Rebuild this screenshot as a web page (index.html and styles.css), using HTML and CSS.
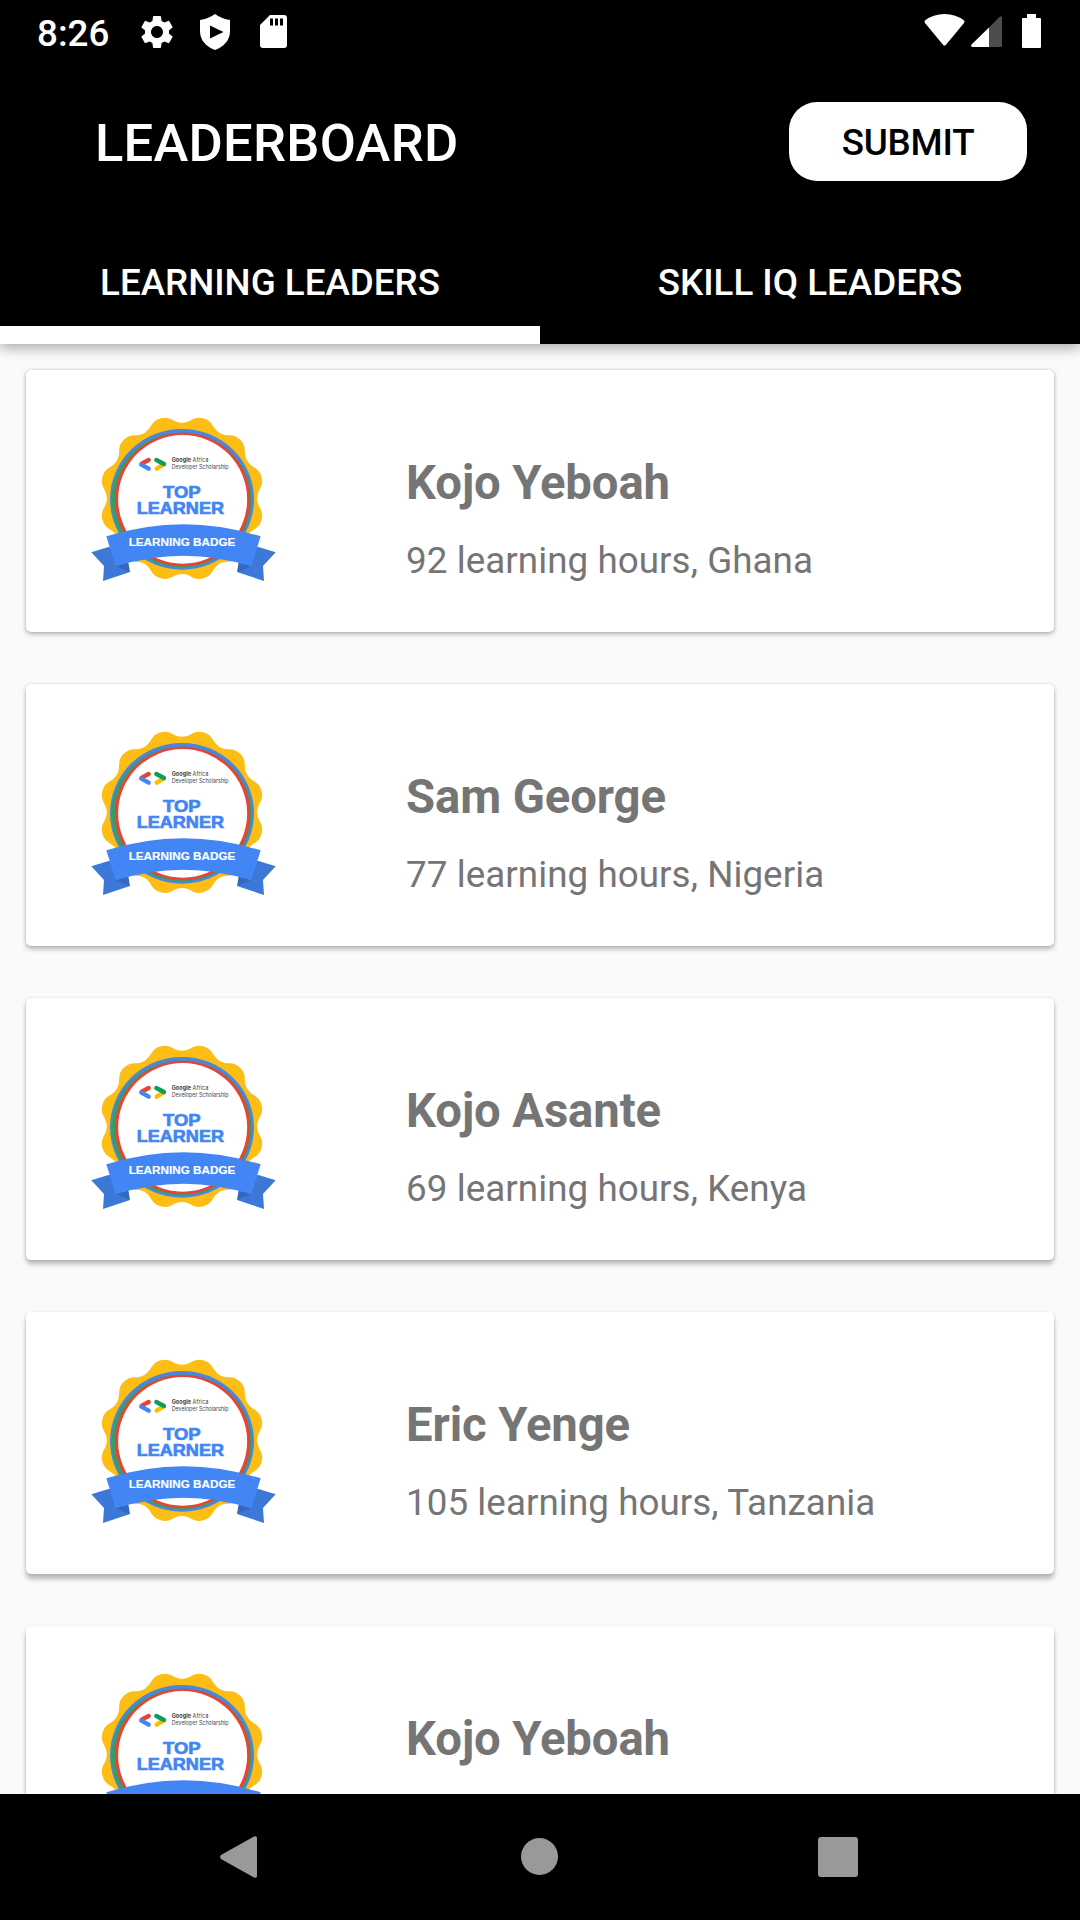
FILE: index.html
```html
<!DOCTYPE html>
<html lang="en">
<head>
<meta charset="utf-8">
<title>Leaderboard</title>
<link rel="stylesheet" href="styles.css">
</head>
<body>
<svg class="defs" aria-hidden="true">
  <defs>
    <path id="lobe" d="M-59.3-221.2C-33-228-32-251 0-251S33-228 59.3-221.2L0 0Z"/>
    <g id="badge">
      <g fill="#fcbe15" transform="translate(336 325) scale(.985 .99)">
        <circle r="227"/>
        <use href="#lobe" transform="rotate(15)"/><use href="#lobe" transform="rotate(45)"/>
        <use href="#lobe" transform="rotate(75)"/><use href="#lobe" transform="rotate(105)"/>
        <use href="#lobe" transform="rotate(135)"/><use href="#lobe" transform="rotate(165)"/>
        <use href="#lobe" transform="rotate(195)"/><use href="#lobe" transform="rotate(225)"/>
        <use href="#lobe" transform="rotate(255)"/><use href="#lobe" transform="rotate(285)"/>
        <use href="#lobe" transform="rotate(315)"/><use href="#lobe" transform="rotate(345)"/>
      </g>
      <ellipse cx="336" cy="328" rx="216" ry="211" fill="#4a86e0"/>
      <ellipse cx="335" cy="330" rx="210" ry="202" fill="#34a060"/>
      <ellipse cx="338" cy="328.500" rx="203" ry="200" fill="#ea4335"/>
      <ellipse cx="338" cy="328" rx="193.500" ry="193" fill="#fff"/>
      <g fill="none" stroke-width="13" stroke-linecap="round">
        <path d="M236 210L215 221" stroke="#ea4335"/>
        <path d="M214 224L236 236" stroke="#4285f4"/>
        <path d="M281 223L260 236" stroke="#fbbc04"/>
        <path d="M259 210L282 222" stroke="#0f9d58"/>
      </g>
      <path d="M64 487L118 470L180 546L99 573L102 528Z" fill="#3c78d8"/>
      <path d="M617 487L563 470L501 546L582 573L579 528Z" fill="#3c78d8"/>
      <path d="M137 528L175 517L180 546Z" fill="#3467bd"/>
      <path d="M544 528L506 517L501 546Z" fill="#3467bd"/>
      <path d="M109 439Q340 366 572 439L544 529Q340 465 137 529Z" fill="#4285f4"/>
    </g>
  </defs>
</svg>
<div class="screen">
  <div class="status-bar">
    <span class="clock">8:26</span>
    <svg class="gear" viewBox="0 0 24 24"><path fill="#fff" d="M19.140 12.940c.04-.3.060-.61.060-.94 0-.32-.02-.64-.07-.94l2.030-1.580c.18-.14.230-.41.120-.61l-1.920-3.320c-.12-.22-.37-.29-.59-.22l-2.390.96c-.5-.38-1.030-.7-1.620-.94l-.36-2.540c-.04-.24-.24-.41-.48-.41h-3.840c-.24 0-.43.170-.47.410l-.36 2.540c-.59.240-1.130.570-1.620.940l-2.390-.96c-.22-.08-.47 0-.59.220L2.740 8.870c-.12.210-.08.470.120.610l2.030 1.580c-.05.300-.09.630-.09.940s.02.640.070.940l-2.030 1.580c-.18.140-.23.410-.12.610l1.920 3.320c.12.220.37.290.59.220l2.390-.96c.5.380 1.030.7 1.620.940l.36 2.540c.05.240.240.410.480.410h3.840c.24 0 .44-.17.470-.41l.36-2.540c.59-.24 1.130-.56 1.620-.94l2.390.96c.22.080.470 0 .59-.22l1.920-3.320c.12-.22.070-.47-.12-.61l-2.010-1.580zM12 15.600c-1.980 0-3.600-1.620-3.600-3.600s1.620-3.600 3.600-3.600 3.600 1.620 3.600 3.600-1.620 3.600-3.600 3.600z"/></svg>
    <svg class="shield" viewBox="0 0 30 36"><path fill="#fff" d="M15 0Q22 5 30 6V17Q30 30 15 36Q0 30 0 17V6Q8 5 15 0Z"/><path fill="#000" d="M10 11.500L23.500 18L10 24.500Z"/></svg>
    <svg class="sd-card" viewBox="0 0 27 33"><path fill="#fff" d="M10 0H24Q27 0 27 3V30Q27 33 24 33H3Q0 33 0 30V10Z"/><path fill="#000" d="M10 3.500h3v7h-3zM15 3.500h3v7h-3zM20 3.500h3v7h-3z"/></svg>
    <svg class="wifi" viewBox="0 0 41 32"><path fill="#fff" d="M1 6.500Q9 0 20.500 0T40 6.500Q41 7.500 40 9L21.800 31Q20.500 32 19.200 31L1 9Q0 7.500 1 6.500Z"/></svg>
    <svg class="signal" viewBox="0 0 31 31"><path fill="#fff" d="M18 11.500V31H1Q-.5 30 .5 28.500Z"/><path fill="#4d4d4d" d="M18 11.500L28.500 1Q30.500-.5 31 1.500V29.500Q31 31 29.500 31H18Z"/></svg>
    <svg class="battery" viewBox="0 0 19 34"><path fill="#fff" d="M5 0H14V4H18Q19 4 19 5V33Q19 34 18 34H1Q0 34 0 33V5Q0 4 1 4H5Z"/></svg>
  </div>
  <header class="app-bar">
    <div class="toolbar">
      <h1 class="title">LEADERBOARD</h1>
      <button class="submit">SUBMIT</button>
    </div>
    <nav class="tabs">
      <a class="tab tab-active">LEARNING LEADERS</a>
      <a class="tab">SKILL IQ LEADERS</a>
    </nav>
  </header>
  <main class="list">
    <article class="card">
      <svg class="badge" viewBox="0 0 690 630"><use href="#badge"/><text class="org" x="305" y="216" textLength="110" lengthAdjust="spacingAndGlyphs"><tspan class="org-strong">Google</tspan> Africa</text><text class="org" x="305" y="237" textLength="171" lengthAdjust="spacingAndGlyphs">Developer Scholarship</text><text class="rank" x="279" y="323" textLength="113" lengthAdjust="spacingAndGlyphs">TOP</text><text class="rank" x="200" y="371" textLength="262" lengthAdjust="spacingAndGlyphs">LEARNER</text><text class="ribbon" x="176" y="468" textLength="320" lengthAdjust="spacingAndGlyphs">LEARNING BADGE</text></svg>
      <div class="info"><h2 class="name">Kojo Yeboah</h2><p class="detail">92 learning hours, Ghana</p></div>
    </article>
    <article class="card">
      <svg class="badge" viewBox="0 0 690 630"><use href="#badge"/><text class="org" x="305" y="216" textLength="110" lengthAdjust="spacingAndGlyphs"><tspan class="org-strong">Google</tspan> Africa</text><text class="org" x="305" y="237" textLength="171" lengthAdjust="spacingAndGlyphs">Developer Scholarship</text><text class="rank" x="279" y="323" textLength="113" lengthAdjust="spacingAndGlyphs">TOP</text><text class="rank" x="200" y="371" textLength="262" lengthAdjust="spacingAndGlyphs">LEARNER</text><text class="ribbon" x="176" y="468" textLength="320" lengthAdjust="spacingAndGlyphs">LEARNING BADGE</text></svg>
      <div class="info"><h2 class="name">Sam George</h2><p class="detail">77 learning hours, Nigeria</p></div>
    </article>
    <article class="card">
      <svg class="badge" viewBox="0 0 690 630"><use href="#badge"/><text class="org" x="305" y="216" textLength="110" lengthAdjust="spacingAndGlyphs"><tspan class="org-strong">Google</tspan> Africa</text><text class="org" x="305" y="237" textLength="171" lengthAdjust="spacingAndGlyphs">Developer Scholarship</text><text class="rank" x="279" y="323" textLength="113" lengthAdjust="spacingAndGlyphs">TOP</text><text class="rank" x="200" y="371" textLength="262" lengthAdjust="spacingAndGlyphs">LEARNER</text><text class="ribbon" x="176" y="468" textLength="320" lengthAdjust="spacingAndGlyphs">LEARNING BADGE</text></svg>
      <div class="info"><h2 class="name">Kojo Asante</h2><p class="detail">69 learning hours, Kenya</p></div>
    </article>
    <article class="card">
      <svg class="badge" viewBox="0 0 690 630"><use href="#badge"/><text class="org" x="305" y="216" textLength="110" lengthAdjust="spacingAndGlyphs"><tspan class="org-strong">Google</tspan> Africa</text><text class="org" x="305" y="237" textLength="171" lengthAdjust="spacingAndGlyphs">Developer Scholarship</text><text class="rank" x="279" y="323" textLength="113" lengthAdjust="spacingAndGlyphs">TOP</text><text class="rank" x="200" y="371" textLength="262" lengthAdjust="spacingAndGlyphs">LEARNER</text><text class="ribbon" x="176" y="468" textLength="320" lengthAdjust="spacingAndGlyphs">LEARNING BADGE</text></svg>
      <div class="info"><h2 class="name">Eric Yenge</h2><p class="detail">105 learning hours, Tanzania</p></div>
    </article>
    <article class="card">
      <svg class="badge" viewBox="0 0 690 630"><use href="#badge"/><text class="org" x="305" y="216" textLength="110" lengthAdjust="spacingAndGlyphs"><tspan class="org-strong">Google</tspan> Africa</text><text class="org" x="305" y="237" textLength="171" lengthAdjust="spacingAndGlyphs">Developer Scholarship</text><text class="rank" x="279" y="323" textLength="113" lengthAdjust="spacingAndGlyphs">TOP</text><text class="rank" x="200" y="371" textLength="262" lengthAdjust="spacingAndGlyphs">LEARNER</text><text class="ribbon" x="176" y="468" textLength="320" lengthAdjust="spacingAndGlyphs">LEARNING BADGE</text></svg>
      <div class="info"><h2 class="name">Kojo Yeboah</h2></div>
    </article>
  </main>
  <footer class="nav-bar">
    <svg class="back" viewBox="0 0 37 42"><path fill="#999" d="M1 19L34 .5Q37-.5 37 2V40Q37 42.500 34 41.500L1 23Q-.8 21 1 19Z"/></svg>
    <svg class="home" viewBox="0 0 37 37"><circle cx="18.500" cy="18.500" r="18.500" fill="#999"/></svg>
    <svg class="recents" viewBox="0 0 40 40"><rect width="40" height="40" rx="3" fill="#999"/></svg>
  </footer>
</div>
</body>
</html>
```
FILE: styles.css
```css
* { box-sizing: border-box; }

body {
  margin: 0;
  background: #fafafa;
  font-family: Roboto, "Liberation Sans", sans-serif;
}

h1, h2, p { margin: 0; }

svg { display: block; flex: none; }

.defs { position: absolute; width: 0; height: 0; }

.screen {
  width: 1080px;
  height: 1920px;
  display: flex;
  flex-direction: column;
  overflow: hidden;
}

.status-bar {
  flex: none;
  height: 67px;
  padding: 0 39px 0 37px;
  display: flex;
  align-items: flex-start;
  background: #000;
  color: #fff;
}

.clock { width: 100px; font-size: 36.75px; font-weight: 500; line-height: 67px; }
.gear { width: 40px; height: 40px; margin-top: 12px; }
.shield { width: 30px; height: 36px; margin: 14px 0 0 23px; }
.sd-card { width: 27px; height: 33px; margin: 15px 0 0 30px; }
.wifi { width: 41px; height: 32px; margin: 14px 0 0 auto; }
.signal { width: 31px; height: 31px; margin: 16px 0 0 6px; }
.battery { width: 19px; height: 34px; margin: 14px 0 0 20px; }

.app-bar {
  flex: none;
  height: 277px;
  display: flex;
  flex-direction: column;
  background: #000;
  color: #fff;
  box-shadow: 0 4px 12px rgba(0, 0, 0, .32);
  z-index: 1;
}

.toolbar {
  height: 153px;
  padding: 35px 53px 0 95px;
  display: flex;
  justify-content: space-between;
  align-items: flex-start;
}

.title { font-size: 52.5px; font-weight: 500; line-height: 82px; letter-spacing: .25px; }

.submit {
  width: 238px;
  height: 79px;
  padding: 3px 0 0;
  border: 0;
  border-radius: 28px;
  background: #fff;
  color: #000;
  font: 500 36.75px/76px Roboto, "Liberation Sans", sans-serif;
  letter-spacing: -.2px;
}

.tabs { flex: 1; display: flex; }

.tab {
  flex: 1;
  padding-top: 34px;
  border-bottom: 18px solid #000;
  font-size: 36.75px;
  font-weight: 500;
  line-height: 57px;
  text-align: center;
}

.tab-active { border-bottom-color: #fff; }

.list {
  flex: 1;
  min-height: 0;
  padding: 26px 26px 0;
  display: flex;
  flex-direction: column;
  gap: 52px;
  overflow: hidden;
}

.card {
  flex: none;
  height: 262px;
  padding-left: 44px;
  display: flex;
  align-items: flex-start;
  border-radius: 5px;
  background: #fff;
  box-shadow: 0 2px 5px rgba(0, 0, 0, .27), 0 0 3px rgba(0, 0, 0, .15);
}

/* The cast shadow lengthens for cards further down the screen. */
.card:nth-child(2) { box-shadow: 0 3px 5px rgba(0, 0, 0, .27), 0 0 3px rgba(0, 0, 0, .13); }
.card:nth-child(3) { box-shadow: 0 4px 5px rgba(0, 0, 0, .27), 0 0 3px rgba(0, 0, 0, .11); }
.card:nth-child(n+4) { box-shadow: 0 5px 5px rgba(0, 0, 0, .27), 0 0 3px rgba(0, 0, 0, .09); }

.badge { width: 230px; height: 210px; margin-top: 20px; }

.org { font: 400 17px Inter, sans-serif; fill: #444; }
.org-strong { font-weight: 700; }
.rank { font: 800 50px "Liberation Sans", Arial, sans-serif; fill: #4285f4; stroke: #4285f4; stroke-width: 2px; }
.ribbon { font: 700 33px "Liberation Sans", Arial, sans-serif; fill: #fff; stroke: #fff; stroke-width: .5px; }

.info {
  padding: 85px 0 0 106px;
  display: flex;
  flex-direction: column;
  gap: 28px;
  color: #757575;
}

.name { font-size: 47.25px; font-weight: 700; line-height: 56px; letter-spacing: -.1px; }
.detail { font-size: 36.75px; line-height: 43px; letter-spacing: .07px; }

.nav-bar {
  flex: none;
  height: 126px;
  padding: 0 222px 0 220px;
  display: flex;
  align-items: center;
  background: #000;
}

.back { width: 37px; height: 42px; }
.home { width: 37px; height: 37px; margin: 0 auto 1px 264px; }
.recents { width: 40px; height: 40px; }
```
